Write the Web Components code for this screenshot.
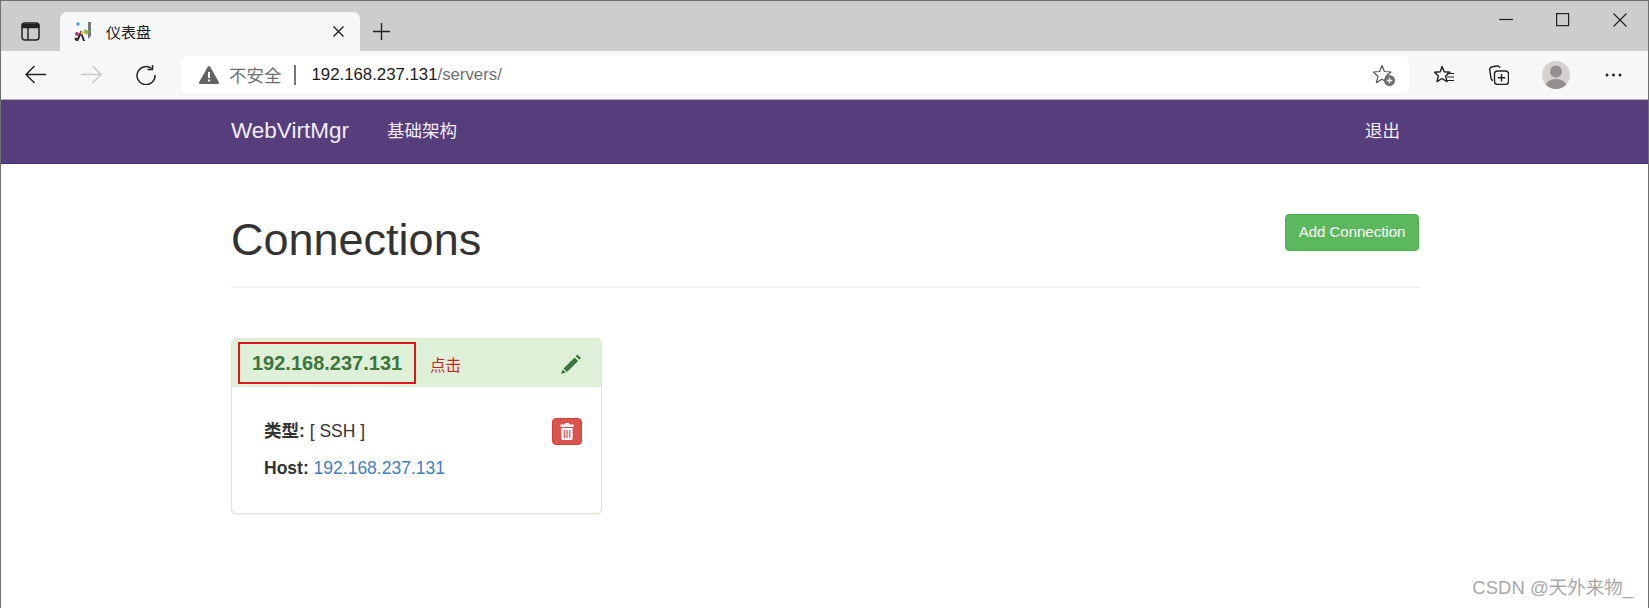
<!DOCTYPE html>
<html lang="zh">
<head>
<meta charset="utf-8">
<title>仪表盘</title>
<style>
  html, body { margin: 0; padding: 0; background: #fff; }
  body { height: 608px; overflow: hidden; font-family: "Liberation Sans", "Noto Sans CJK SC", sans-serif; }
</style>
</head>
<body>
<browser-window>
  <tab-strip title-text="仪表盘"></tab-strip>
  <address-toolbar host-part="192.168.237.131" path-part="/servers/"></address-toolbar>
  <app-navbar brand="WebVirtMgr" link="基础架构" logout="退出"></app-navbar>
  <page-content>
    <page-header heading="Connections" action="Add Connection"></page-header>
    <server-card address="192.168.237.131" kind="[ SSH ]" note="点击"></server-card>
  </page-content>
  <water-mark>CSDN @天外来物_</water-mark>
</browser-window>

<script>
const CJK = '"Liberation Sans", "Noto Sans CJK SC", sans-serif';

class BrowserWindow extends HTMLElement {
  constructor() {
    super();
    this.attachShadow({ mode: 'open' });
    this.shadowRoot.innerHTML = `
      <style>
        :host {
          display: block;
          position: relative;
          box-sizing: border-box;
          height: 608px;
          border: 1px solid #707070;
          border-bottom: none;
          font-family: ${CJK};
        }
      </style>
      <slot></slot>
    `;
  }
}

class TabStrip extends HTMLElement {
  constructor() {
    super();
    this.attachShadow({ mode: 'open' });
  }

  connectedCallback() {
    this.shadowRoot.innerHTML = `
      <style>
        :host {
          display: flex;
          align-items: flex-end;
          height: 50px;
          background: #cdcdcd;
        }
        svg { display: block; flex: none; }
        .sidebar { margin: 0 0 10px 20px; }
        .tab {
          display: flex;
          align-items: center;
          box-sizing: border-box;
          width: 300px;
          height: 39px;
          margin-left: 20px;
          padding-left: 14px;
          background: #f7f7f7;
          border-radius: 7px 7px 0 0;
        }
        .title { margin-left: 11px; font-size: 15px; color: #1a1a1a; flex: 1; }
        .close { margin-right: 16px; }
        .plus { margin: 0 0 11px 13px; }
        .win { display: flex; align-self: flex-start; margin-left: auto; margin-top: 12px; margin-right: 21px; gap: 43px; }
      </style>
      <svg class="sidebar" width="19" height="19" viewBox="0 0 19 19" fill="none" stroke="#222" stroke-width="1.5">
        <rect x="1" y="1" width="17" height="17" rx="3"/>
        <path d="M1.5 2.5h16v3h-16z" fill="#222"/>
        <path d="M7 5v13"/>
      </svg>
      <div class="tab">
        <svg width="21" height="21" viewBox="0 0 21 21">
          <circle cx="4" cy="3" r="1.7" fill="#3aa0c8"/>
          <path d="M14 1l3 0 0 14-3 3z" fill="#77777f"/>
          <path d="M10 8l5 2-2 4-3-2z" fill="#8fb84a"/>
          <path d="M7 9l4 11-2 0-2-6-3 6-2 0z" fill="#222"/>
          <circle cx="3" cy="13" r="2" fill="#c2307e"/>
          <circle cx="2" cy="18" r="1.5" fill="#333"/>
          <circle cx="8" cy="12" r="1.6" fill="#e4c23c"/>
        </svg>
        <span class="title">${this.getAttribute('title-text')}</span>
        <svg class="close" width="11" height="11" viewBox="0 0 11 11" stroke="#1a1a1a" stroke-width="1.3"><path d="M.5.5l10 10M10.5.5l-10 10"/></svg>
      </div>
      <svg class="plus" width="17" height="17" viewBox="0 0 17 17" stroke="#222" stroke-width="1.4"><path d="M8.5 0v17M0 8.5h17"/></svg>
      <div class="win">
        <svg width="14" height="14" viewBox="0 0 14 14" stroke="#222" stroke-width="1.2"><path d="M0 6.5h14"/></svg>
        <svg width="14" height="14" viewBox="0 0 14 14" fill="none" stroke="#222" stroke-width="1.2"><rect x=".6" y=".6" width="12" height="12"/></svg>
        <svg width="14" height="14" viewBox="0 0 14 14" stroke="#222" stroke-width="1.1"><path d="M.5.5l13 13M13.5.5l-13 13"/></svg>
      </div>
    `;
  }
}

class AddressToolbar extends HTMLElement {
  constructor() {
    super();
    this.attachShadow({ mode: 'open' });
  }

  connectedCallback() {
    this.shadowRoot.innerHTML = `
      <style>
        :host {
          display: flex;
          align-items: center;
          box-sizing: border-box;
          height: 49px;
          padding-bottom: 1px;
          background: #f7f7f7;
          border-bottom: 1px solid #b4aebb;
        }
        svg { display: block; flex: none; }
        .back { margin-left: 24px; }
        .forward { margin-left: 35px; }
        .reload { margin-left: 34px; }
        .bar {
          display: flex;
          align-items: center;
          box-sizing: border-box;
          width: 1228px;
          height: 37px;
          margin-left: 25px;
          padding: 0 14px 0 18px;
          background: #fff;
          border-radius: 6px;
        }
        .label { margin-left: 10px; font-size: 17.5px; color: #6f6f6f; }
        .sep { width: 2px; height: 20px; margin: 0 16px 0 12px; background: #777; }
        .url { font-size: 16.8px; color: #6f6f6f; flex: 1; white-space: nowrap; }
        .url b { font-weight: normal; color: #1a1a1a; }
        .fav { margin-left: 25px; }
        .coll { margin-left: 35px; }
        .avatar { margin-left: 33px; }
        .more { margin-left: 35px; }
      </style>
      <svg class="back" width="21" height="19" viewBox="0 0 21 19" fill="none" stroke="#222" stroke-width="1.5"><path d="M21 9.5H1M9.5 1L1 9.5 9.5 18"/></svg>
      <svg class="forward" width="21" height="19" viewBox="0 0 21 19" fill="none" stroke="#c9c9c9" stroke-width="1.5"><path d="M0 9.5h20M11.5 1L20 9.5 11.5 18"/></svg>
      <svg class="reload" width="20" height="20" viewBox="0 0 20 20" fill="none" stroke="#222" stroke-width="1.5"><path d="M15.5 3.5A9 9 0 1 0 19 10"/><path d="M11.5 4.6h5V0"/></svg>
      <div class="bar">
        <svg width="20" height="18" viewBox="0 0 20 18"><path d="M10 0a1.4 1.4 0 0 1 1.2.7l8.6 15.4a1.3 1.3 0 0 1-1.2 1.9H1.4a1.3 1.3 0 0 1-1.2-1.9L8.8.7A1.4 1.4 0 0 1 10 0z" fill="#636363"/><path d="M9 6h2v6H9zM9 13.4h2v2H9z" fill="#fff"/></svg>
        <span class="label">不安全</span>
        <span class="sep"></span>
        <span class="url"><b>${this.getAttribute('host-part')}</b>${this.getAttribute('path-part')}</span>
        <svg width="22" height="22" viewBox="0 0 22 22">
          <path d="M9 1.5l2.4 6 6.6.5-5 4.3 1.600 6.400-5.600-3.500-5.600 3.500 1.600-6.400-5-4.300 6.600-.5z" fill="none" stroke="#555" stroke-width="1.200" stroke-linejoin="round"/>
          <circle cx="16.500" cy="16.500" r="5.500" fill="#6e6e6e"/>
          <path d="M16.500 13.800v5.400M13.800 16.500h5.400" stroke="#fff" stroke-width="1.300"/>
        </svg>
      </div>
      <svg class="fav" width="20" height="20" viewBox="0 0 20 20" fill="none" stroke="#222" stroke-width="1.400" stroke-linejoin="round">
        <path d="M8 1.500l2.200 5.300 5.800.4-4.400 3.800 1.400 5.600-5-3.100-5 3.100 1.400-5.600L.5 7.200l5.800-.4z"/>
        <path d="M13 8.500h7M13 12h7M13 15.500h7" stroke-width="1.200"/>
      </svg>
      <svg class="coll" width="20" height="20" viewBox="0 0 20 20" fill="none" stroke="#222" stroke-width="1.400">
        <path d="M4 15.500A2.500 2.500 0 0 1 2 13.200L.8 5.200A3 3 0 0 1 3.300 1.700L8 1a3 3 0 0 1 3 1.800"/>
        <rect x="5.500" y="6" width="14" height="13.500" rx="3"/>
        <path d="M12.500 9v7.500M8.700 12.700h7.600"/>
      </svg>
      <svg class="avatar" width="28" height="28" viewBox="0 0 28 28">
        <defs><clipPath id="c"><circle cx="14" cy="14" r="14"/></clipPath></defs>
        <circle cx="14" cy="14" r="14" fill="#d3d2d0"/>
        <g clip-path="url(#c)" fill="#94908d">
          <circle cx="14" cy="10.500" r="6"/>
          <ellipse cx="14" cy="25" rx="10.500" ry="7"/>
        </g>
      </svg>
      <svg class="more" width="17" height="4" viewBox="0 0 17 4" fill="#222">
        <circle cx="2" cy="2" r="1.500"/><circle cx="8.500" cy="2" r="1.500"/><circle cx="15" cy="2" r="1.500"/>
      </svg>
    `;
  }
}

class AppNavbar extends HTMLElement {
  constructor() {
    super();
    this.attachShadow({ mode: 'open' });
  }

  connectedCallback() {
    this.shadowRoot.innerHTML = `
      <style>
        :host {
          display: block;
          box-sizing: border-box;
          height: 64px;
          background: #563d7c;
          border-bottom: 1px solid #452f6b;
          color: #f3eefa;
        }
        .inner {
          display: flex;
          align-items: center;
          width: 1188px;
          height: 60px;
          margin-left: 230px;
        }
        .brand { padding-top: 2px; font-size: 22.500px; }
        .link { margin-left: 38px; padding-bottom: 2px; font-size: 17.500px; }
        .logout { margin-left: auto; margin-right: 19px; padding-bottom: 2px; font-size: 17.500px; }
      </style>
      <div class="inner">
        <span class="brand">${this.getAttribute('brand')}</span>
        <span class="link">${this.getAttribute('link')}</span>
        <span class="logout">${this.getAttribute('logout')}</span>
      </div>
    `;
  }
}

class PageContent extends HTMLElement {
  constructor() {
    super();
    this.attachShadow({ mode: 'open' });
    this.shadowRoot.innerHTML = `
      <style>
        :host { display: block; width: 1188px; margin-left: 230px; }
      </style>
      <slot></slot>
    `;
  }
}

class PageHeader extends HTMLElement {
  constructor() {
    super();
    this.attachShadow({ mode: 'open' });
  }

  connectedCallback() {
    this.shadowRoot.innerHTML = `
      <style>
        :host {
          display: flex;
          justify-content: space-between;
          align-items: flex-start;
          box-sizing: border-box;
          height: 124px;
          padding-top: 50px;
          border-bottom: 1px solid #eeeeee;
        }
        h1 { margin: 1px 0 0; font-size: 45px; line-height: 50px; font-weight: 500; color: #333; }
        button {
          box-sizing: border-box;
          height: 37px;
          padding: 0 0 2px;
          width: 134px;
          font: 15px "Liberation Sans", sans-serif;
          color: #fff;
          background: #5cb85c;
          border: 1px solid #4cae4c;
          border-radius: 4px;
        }
      </style>
      <h1>${this.getAttribute('heading')}</h1>
      <button type="button">${this.getAttribute('action')}</button>
    `;
  }
}

class ServerCard extends HTMLElement {
  constructor() {
    super();
    this.attachShadow({ mode: 'open' });
  }

  connectedCallback() {
    const address = this.getAttribute('address');
    this.shadowRoot.innerHTML = `
      <style>
        :host {
          display: block;
          box-sizing: border-box;
          width: 371px;
          height: 176px;
          margin-top: 50px;
          background: #fff;
          border: 1px solid #dbe6d3;
          border-radius: 5px;
          box-shadow: 0 1px 1px rgba(0,0,0,.05);
          font-size: 17.500px;
          color: #333;
        }
        .head {
          display: flex;
          align-items: center;
          box-sizing: border-box;
          height: 48px;
          padding: 0 19px 0 6px;
          background: #dff0d8;
          border-radius: 4px 4px 0 0;
          color: #3c763d;
        }
        .addr {
          display: flex;
          align-items: center;
          box-sizing: border-box;
          width: 178px;
          height: 42px;
          padding-left: 12px;
          border: 2px solid #d9161c;
          font-size: 20px;
          font-weight: bold;
        }
        .note { margin: 2px 0 0 14px; font-size: 15.500px; color: #cc1f24; }
        .edit { margin-left: auto; display: block; }
        .body {
          display: flex;
          justify-content: space-between;
          align-items: flex-start;
          padding: 32px 19px 0 32px;
        }
        .rows p { margin: 0 0 12px; line-height: 25px; }
        .rows a { color: #3f7fba; text-decoration: none; }
        .del {
          display: flex;
          align-items: center;
          justify-content: center;
          width: 30px;
          height: 27px;
          margin-top: -1px;
          background: #d9534f;
          border: 1px solid #d43f3a;
          box-sizing: border-box;
          border-radius: 4px;
        }
      </style>
      <div class="head">
        <div class="addr">${address}</div>
        <span class="note">${this.getAttribute('note')}</span>
        <svg class="edit" width="21" height="21" viewBox="0 0 21 21" fill="#3c763d">
          <path d="M16.500 1.500l3.500 3.500-1.800 1.800-3.500-3.500zM13.600 4.400l3.500 3.500L6 19 2.500 15.500zM1.800 16.500l3 3L0 21z"/>
        </svg>
      </div>
      <div class="body">
        <div class="rows">
          <p><b>类型:</b> ${this.getAttribute('kind')}</p>
          <p><b>Host:</b> <a href="#">${address}</a></p>
        </div>
        <div class="del">
          <svg width="14" height="17" viewBox="0 0 15 17" preserveAspectRatio="none" fill="#fff">
            <path d="M5.500 0h4l.6 1.500H14.500V4H.5V1.500H4.900z"/>
            <path d="M1.500 5h12v10.500a1.500 1.500 0 0 1-1.500 1.500H3a1.500 1.500 0 0 1-1.500-1.500zM4 7v8h1.300V7zm2.900 0v8h1.300V7zm2.900 0v8h1.300V7z" fill-rule="evenodd"/>
          </svg>
        </div>
      </div>
    `;
  }
}

class WaterMark extends HTMLElement {
  constructor() {
    super();
    this.attachShadow({ mode: 'open' });
    this.shadowRoot.innerHTML = `
      <style>
        :host {
          position: absolute;
          right: 15px;
          bottom: 9px;
          font-size: 18.500px;
          line-height: 22px;
          color: #a8a8a8;
          white-space: nowrap;
        }
      </style>
      <slot></slot>
    `;
  }
}

customElements.define('browser-window', BrowserWindow);
customElements.define('tab-strip', TabStrip);
customElements.define('address-toolbar', AddressToolbar);
customElements.define('app-navbar', AppNavbar);
customElements.define('page-content', PageContent);
customElements.define('page-header', PageHeader);
customElements.define('server-card', ServerCard);
customElements.define('water-mark', WaterMark);
</script>
</body>
</html>
